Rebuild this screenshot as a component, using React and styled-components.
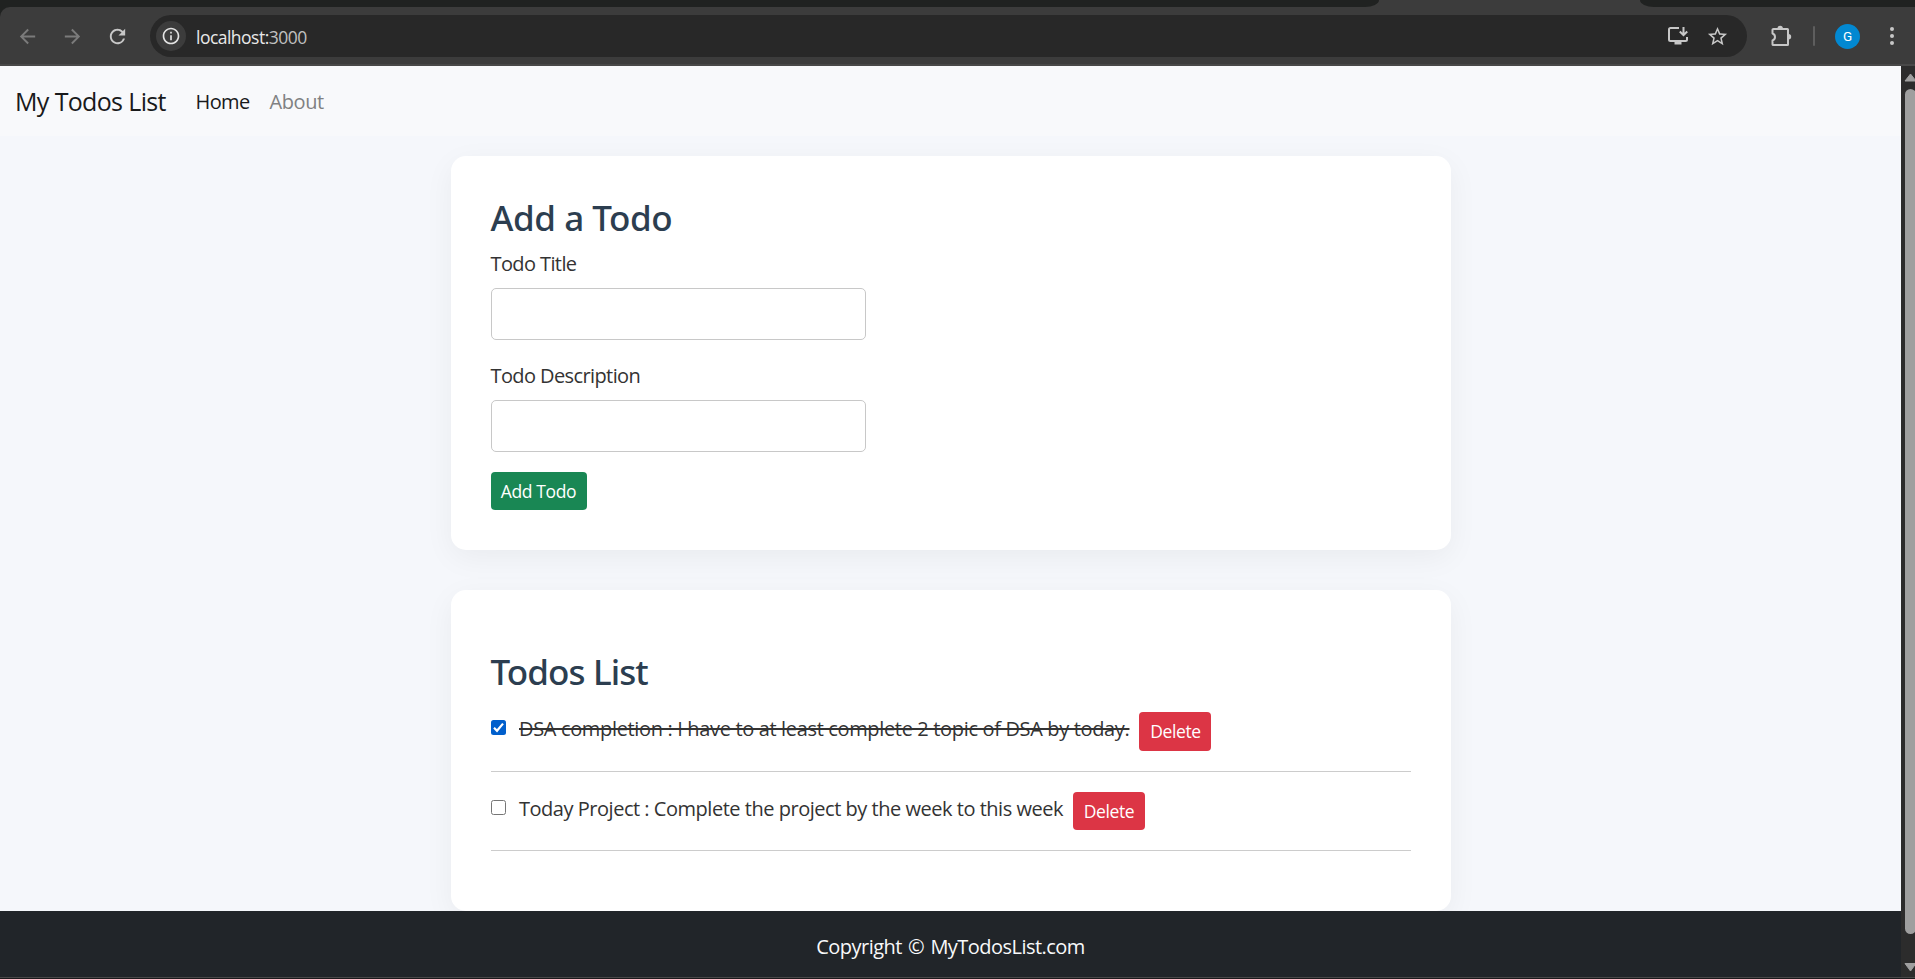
import React, { useState } from "react";
import styled, { createGlobalStyle } from "styled-components";
import { MdArrowBack, MdArrowForward, MdRefresh, MdInfoOutline, MdStarOutline } from "react-icons/md";

const GlobalStyle = createGlobalStyle`
  *, *::before, *::after { box-sizing: border-box; }
  body {
    margin: 0;
    overflow: hidden;
    font-family: "Open Sans", "Noto Sans", sans-serif;
    font-size: 20px;
    line-height: 32px;
    color: #333;
    background: #f5f7fb;
  }
`;

const Window = styled.div`
  display: flex;
  flex-direction: column;
  height: 979px;
  background: #202221;
`;

const TabStrip = styled.div`
  display: flex;
  justify-content: space-between;
  flex: none;
  height: 7px;
  background: #3c3c3c;
`;

const InactiveTabs = styled.div`
  width: ${(p) => p.$width}px;
  background: #202221;
  border-bottom-left-radius: ${(p) => (p.$side === "right" ? "14px 7px" : 0)};
  border-bottom-right-radius: ${(p) => (p.$side === "left" ? "14px 7px" : 0)};
`;

const Toolbar = styled.header`
  display: flex;
  align-items: center;
  flex: none;
  height: 59px;
  padding: 1px 9px 0 16px;
  background: #3c3c3c;
  border-bottom: 2px solid #484848;
  border-top-left-radius: 10px;
`;

const ToolButton = styled.span`
  display: flex;
  align-items: center;
  justify-content: center;
  width: ${(p) => p.$width || 23}px;
  height: 30px;
  margin-right: ${(p) => p.$gap || 0}px;
  color: ${(p) => (p.$dim ? "#7b7b7b" : "#c7c7c7")};
  svg { display: block; flex: none; }
`;

const AddressBar = styled.div`
  display: flex;
  align-items: center;
  width: 1597px;
  height: 42px;
  margin-right: 23px;
  padding: 0 18px 0 6px;
  border-radius: 21px;
  background: #282828;
`;

const SiteInfo = styled.span`
  display: flex;
  align-items: center;
  justify-content: center;
  width: 30px;
  height: 30px;
  border-radius: 50%;
  background: #3c3c3c;
  color: #e3e3e3;
`;

const Url = styled.span`
  flex: 1;
  padding: 1px 0 0 10px;
  font-size: 17.5px;
  letter-spacing: -0.52px;
  color: #e8e8e8;
  span { color: #c0c0c0; }
`;

const Divider = styled.span`
  width: 2px;
  height: 20px;
  margin: 0 20px 0 21px;
  border-radius: 1px;
  background: #5e5e5e;
`;

const Avatar = styled.span`
  display: flex;
  align-items: center;
  justify-content: center;
  width: 25px;
  height: 25px;
  margin-right: 26px;
  border-radius: 50%;
  background: #0288d1;
  color: #fff;
  font: 400 13.5px/25px Roboto, sans-serif;
`;

const Viewport = styled.div`
  display: flex;
  flex: none;
  height: 911px;
`;

const Page = styled.div`
  display: flex;
  flex-direction: column;
  flex: 1;
  overflow: hidden;
  background: #f5f7fb;
`;

const Nav = styled.nav`
  display: flex;
  align-items: center;
  flex: none;
  height: 70px;
  padding-left: 15px;
  background: #f8f9fb;
`;

const Brand = styled.span`
  width: 180.5px;
  font-size: 25px;
  letter-spacing: -0.7px;
  word-spacing: 0.3px;
  color: #191a1b;
`;

const NavLink = styled.span`
  width: ${(p) => (p.$active ? 74 : 75)}px;
  padding-top: 2px;
  letter-spacing: ${(p) => (p.$active ? "-0.6px" : "-0.4px")};
  color: ${(p) => (p.$active ? "#191a1b" : "#808182")};
`;

const Main = styled.main`
  display: flex;
  flex-direction: column;
  align-items: center;
  gap: 40px;
  flex: none;
  padding-top: 20px;
`;

const Card = styled.section`
  width: 1000px;
  padding: ${(p) => (p.$roomy ? "60px 40px" : "40px")};
  border-radius: 15px;
  background: #fff;
  box-shadow: 0 8px 30px rgba(0, 0, 0, 0.05);
`;

const Heading = styled.h3`
  height: 42px;
  margin: 0 0 ${(p) => p.$gap}px;
  font: 500 35px/44px "Noto Sans", sans-serif;
  letter-spacing: ${(p) => p.$tracking}px;
  color: #2c3e50;
`;

const Field = styled.div`
  display: flex;
  flex-direction: column;
  align-items: flex-start;
  gap: 10px;
  margin-bottom: 20px;
`;

const Label = styled.label`
  height: 30px;
  letter-spacing: -0.6px;
`;

const Input = styled.input`
  width: 375px;
  height: 52px;
  padding: 10px;
  border: 1px solid #c8c8c8;
  border-radius: 5px;
  background: #fff;
  font: inherit;
  outline: none;
`;

const Button = styled.button`
  flex: none;
  display: block;
  width: ${(p) => (p.$danger ? 72 : 96)}px;
  height: ${(p) => p.$height || 38}px;
  padding: ${(p) => (p.$height === 39 ? "0 0 2px" : "0")} ;
  border: 0;
  border-radius: 4px;
  background: ${(p) => (p.$danger ? "#dc3545" : "#198754")};
  color: #fff;
  font: 17.5px/24px "Open Sans", sans-serif;
  letter-spacing: -0.38px;
`;

const TodoRow = styled.div`
  display: flex;
  align-items: flex-start;
  height: ${(p) => p.$height}px;
`;

const Check = styled.button`
  display: block;
  width: 15px;
  height: 15px;
  margin: 8px 13.5px 0 0;
  padding: 0;
  border: ${(p) => (p.$checked ? "0" : "1px solid #767676")};
  border-radius: 2.5px;
  background: ${(p) => (p.$checked ? "#005fcc" : "#fff")};
  svg { display: block; }
`;

const TodoText = styled.span`
  margin: 1px 10px 0 0;
  white-space: nowrap;
  letter-spacing: ${(p) => p.$tracking}px;
  text-decoration: ${(p) => (p.$done ? "line-through 2px" : "none")};
`;

const Rule = styled.hr`
  height: 1px;
  margin: 20px 0;
  border: 0;
  background: #cccccc;
  &:last-child { margin-bottom: 0; }
`;

const Footer = styled.footer`
  position: relative;
  flex: 1;
  padding-top: 20px;
  background: #212529;
  color: #f8f9fa;
  text-align: center;
  letter-spacing: -0.54px;
  word-spacing: 1.6px;
`;

const Scrollbar = styled.div`
  display: flex;
  flex-direction: column;
  flex: none;
  width: 14px;
  padding: 7px 0 4px 3px;
  background: #2c2c2c;
  overflow: hidden;
  svg { display: block; flex: none; }
`;

const Thumb = styled.div`
  flex: none;
  width: 11px;
  height: 845px;
  margin: 7px 0 29px 1px;
  border-radius: 5.5px;
  background: #9f9f9f;
`;

const BottomEdge = styled.div`
  flex: none;
  height: 2px;
  background: #1c1a1c;
  border-top: 1px solid #484848;
`;

const InstallIcon = () => (
  <svg width="22" height="20" viewBox="0 0 22 20" fill="none" stroke="currentColor" strokeWidth="2">
    <path d="M12 2H3.5Q2 2 2 3.5V13.5Q2 15 3.5 15H18.5Q20 15 20 13.5V11" />
    <path d="M16.5 1V9M12.8 5.5L16.5 9.2L20.2 5.5" />
    <path d="M7.5 17H14.5" strokeWidth="3" />
  </svg>
);

const PuzzleIcon = () => (
  <svg width="22" height="22" viewBox="0 0 22 22">
    <path
      d="M3.5 4H17.5Q18 4 18 4.5V19.5Q18 20 17.5 20H3.5Q2.5 20 2.5 19.5V15.5Q5 14.700 5 12Q5 9.300 2.500 8.500V4.500Q2.500 4 3.500 4Z"
      fill="none"
      stroke="currentColor"
      strokeWidth="2"
      strokeLinejoin="round"
    />
    <path d="M7.500 3.500a2.700 2.700 0 0 1 5.400 0zM18.500 9a2.700 2.700 0 0 1 0 5.400z" fill="currentColor" />
  </svg>
);

const MenuIcon = () => (
  <svg width="6" height="20" viewBox="0 0 6 20" fill="currentColor">
    <circle cx="3" cy="3" r="2" />
    <circle cx="3" cy="10" r="2" />
    <circle cx="3" cy="17" r="2" />
  </svg>
);

const CheckMark = () => (
  <svg width="15" height="15" viewBox="0 0 15 15" fill="none" stroke="#fff" strokeWidth="2.2">
    <path d="M3 7.800L6 10.800L12 3.600" />
  </svg>
);

const ScrollArrow = ({ down }) => (
  <svg width="13" height="9" viewBox="0 0 13 9">
    <path
      d={down ? "M1 0.500H12L6.500 8Z" : "M1 8H12L6.500 1Z"}
      fill="#9f9f9f"
      stroke="#9f9f9f"
      strokeLinejoin="round"
    />
  </svg>
);

const initialTodos = [
  { id: 1, text: "DSA completion : I have to at least complete 2 topic of DSA by today.", done: true, tracking: -0.345, height: 39 },
  { id: 2, text: "Today Project : Complete the project by the week to this week", done: false, tracking: -0.476, height: 38 },
];

export default function App() {
  const [todos, setTodos] = useState(initialTodos);
  const toggle = (id) => setTodos(todos.map((t) => (t.id === id ? { ...t, done: !t.done } : t)));
  const remove = (id) => setTodos(todos.filter((t) => t.id !== id));

  return (
    <Window>
      <GlobalStyle />
      <TabStrip>
        <InactiveTabs $side="left" $width={1379} />
        <InactiveTabs $side="right" $width={275} />
      </TabStrip>
      <Toolbar>
        <ToolButton $dim $gap={22}><MdArrowBack size={23} /></ToolButton>
        <ToolButton $dim $gap={22}><MdArrowForward size={23} /></ToolButton>
        <ToolButton $gap={21}><MdRefresh size={23} /></ToolButton>
        <AddressBar>
          <SiteInfo><MdInfoOutline size={20} /></SiteInfo>
          <Url>localhost:<span>3000</span></Url>
          <ToolButton $width={22} $gap={17}><InstallIcon /></ToolButton>
          <ToolButton $width={23}><MdStarOutline size={23} /></ToolButton>
        </AddressBar>
        <ToolButton $width={22}><PuzzleIcon /></ToolButton>
        <Divider />
        <Avatar>G</Avatar>
        <ToolButton $width={12}><MenuIcon /></ToolButton>
      </Toolbar>
      <Viewport>
        <Page>
          <Nav>
            <Brand>My Todos List</Brand>
            <NavLink $active>Home</NavLink>
            <NavLink>About</NavLink>
          </Nav>
          <Main>
            <Card>
              <Heading $gap={10} $tracking={-0.45}>Add a Todo</Heading>
              <Field>
                <Label htmlFor="title">Todo Title</Label>
                <Input id="title" />
              </Field>
              <Field>
                <Label htmlFor="desc">Todo Description</Label>
                <Input id="desc" />
              </Field>
              <Button>Add Todo</Button>
            </Card>
            <Card $roomy>
              <Heading $gap={20} $tracking={-0.9}>Todos List</Heading>
              {todos.map((t) => (
                <React.Fragment key={t.id}>
                  <TodoRow $height={t.height}>
                    <Check $checked={t.done} onClick={() => toggle(t.id)}>{t.done && <CheckMark />}</Check>
                    <TodoText $done={t.done} $tracking={t.tracking}>{t.text}</TodoText>
                    <Button $danger $height={t.height} onClick={() => remove(t.id)}>Delete</Button>
                  </TodoRow>
                  <Rule />
                </React.Fragment>
              ))}
            </Card>
          </Main>
          <Footer>Copyright © MyTodosList.com</Footer>
        </Page>
        <Scrollbar>
          <ScrollArrow />
          <Thumb />
          <ScrollArrow down />
        </Scrollbar>
      </Viewport>
      <BottomEdge />
    </Window>
  );
}
